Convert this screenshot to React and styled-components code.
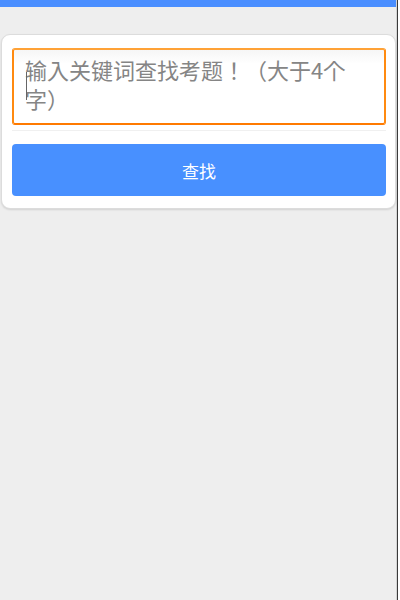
import React from 'react';
import styled, { createGlobalStyle } from 'styled-components';

const GlobalStyle = createGlobalStyle`
  html, body {
    margin: 0;
    padding: 0;
    background: #ffffff;
  }
  body {
    font-family: "Noto Sans CJK SC", "Noto Sans", sans-serif;
  }
`;

const Frame = styled.div`
  display: flex;
  width: 400px;
  height: 600px;
  background: #ffffff;
`;

const Page = styled.div`
  width: 396px;
  height: 600px;
  background: #eeeeee;
  border-right: 1px solid #d4d4d4;
  display: flex;
  flex-direction: column;
`;

const Edge = styled.div`
  width: 1px;
  height: 600px;
  background: #3a3a3a;
`;

const TopBar = styled.div`
  height: 7px;
  background: #4a8eff;
`;

const Card = styled.div`
  margin: 27px 0 0 1px;
  padding: 13px 9px 12px 10px;
  background: #ffffff;
  border: 1px solid #dcdcdc;
  border-radius: 9px;
  box-shadow: 0 1px 2px rgba(0, 0, 0, 0.12);
  display: flex;
  flex-direction: column;
`;

const InputWrap = styled.div`
  position: relative;
  height: 77px;
  box-sizing: border-box;
  border: 2px solid #ff8a10;
  border-top-color: #ffa236;
  border-bottom-color: #ff7a00;
  border-radius: 3px;
  background: linear-gradient(#f6f6f6, #ffffff 14px);
`;

const Field = styled.textarea`
  display: block;
  width: 100%;
  height: 100%;
  box-sizing: border-box;
  margin: 0;
  padding: 5px 10px 0 11px;
  border: none;
  outline: none;
  resize: none;
  background: transparent;
  font-family: "Noto Sans CJK KR", "Noto Sans CJK SC", sans-serif;
  font-size: 22px;
  line-height: 29px;
  color: #333;
  overflow: hidden;

  &::placeholder {
    color: #858585;
  }
`;

const Caret = styled.span`
  position: absolute;
  left: 12px;
  top: 22px;
  width: 1px;
  height: 28px;
  background: #666;
`;

const Divider = styled.div`
  height: 1px;
  margin: 5px 0 13px;
  background: #f0f0f0;
`;

const SearchButton = styled.button`
  height: 52px;
  border: none;
  border-radius: 4px;
  background: #4890ff;
  color: #ffffff;
  font-family: "Noto Sans CJK SC", "Noto Sans", sans-serif;
  font-size: 17px;
  padding: 0;
  cursor: pointer;
`;

export default function App() {
  return (
    <>
      <GlobalStyle />
      <Frame>
        <Page>
          <TopBar />
          <Card>
            <InputWrap>
              <Field placeholder="输入关键词查找考题！（大于4个字）" />
              <Caret />
            </InputWrap>
            <Divider />
            <SearchButton>查找</SearchButton>
          </Card>
        </Page>
        <Edge />
      </Frame>
    </>
  );
}
